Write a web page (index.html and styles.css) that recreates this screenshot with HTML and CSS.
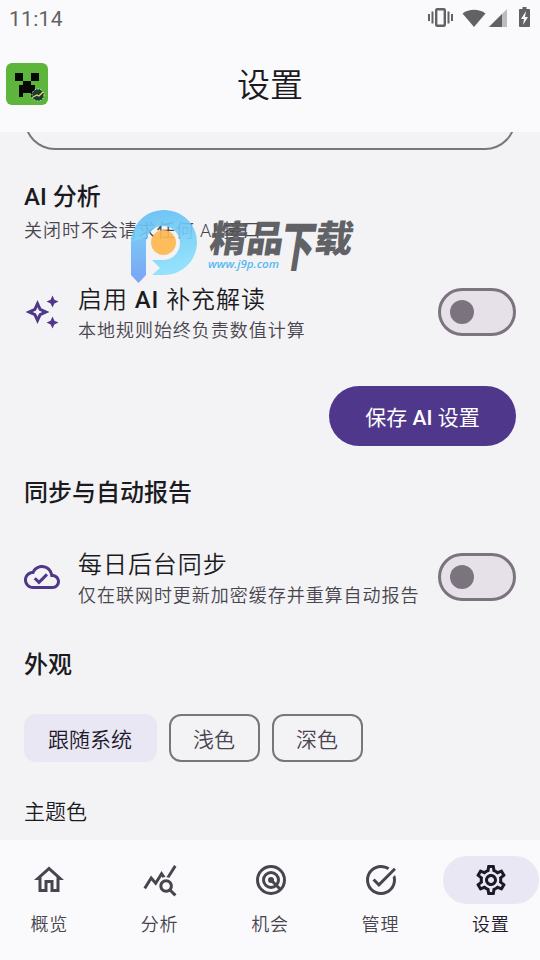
FILE: index.html
```html
<!DOCTYPE html>
<html lang="zh-CN">
<head>
<meta charset="utf-8">
<title>设置</title>
<link rel="stylesheet" href="styles.css">
</head>
<body>
<div class="screen">
  <header class="top">
    <div class="status">
      <span class="time">11:14</span>
      <svg class="status-icons" width="104" height="24" viewBox="0 0 104 24" fill="#626262">
        <path d="M0 12h2v7H0zM3.500 9.500h2v12h-2zM19.500 9.500h2v12h-2zM23 12h2v7h-2z"/>
        <rect x="8.200" y="7.200" width="8.600" height="16.600" rx="1" fill="none" stroke="#626262" stroke-width="2.400"/>
        <path d="M34.500 11.500C41 6.500 51 6.500 57.500 11.500L46 25z"/>
        <path d="M79 7v18H61z" opacity=".4"/>
        <path d="M74 12v13H61z"/>
        <path d="M92 7h2.500V5h4v2h2.500q1 0 1 1v16q0 1-1 1h-9q-1 0-1-1V8q0-1 1-1z"/>
        <path d="M98 9l-5 8h3l-1 6 5-8h-3z" fill="#fafafc"/>
      </svg>
    </div>
    <div class="appbar">
      <svg class="app-icon" width="42" height="42" viewBox="0 0 42 42">
        <rect width="42" height="42" rx="6" fill="#5db53c"/>
        <path d="M9 10h8v8H9zM25 10h8v8h-8zM17 18h8v4h4v12h-4v-4h-8v4h-4V22h4z" fill="#050805"/>
        <circle cx="32" cy="32" r="6" fill="#173e2d" stroke="#e8eee0" stroke-width="1" stroke-dasharray="1.500 1.500"/>
        <path d="M27 34l4-2 2 1 4-4" fill="none" stroke="#f0d36a" stroke-width="1.300"/>
      </svg>
      <h1>设置</h1>
    </div>
  </header>

  <main>
    <div class="field-end"></div>
    <section class="ai">
      <h2>AI 分析</h2>
      <p class="note">关闭时不会请求任何 AI 接口</p>
      <div class="row">
        <svg class="row-icon" viewBox="0 0 24 24"><path d="M19 9l1.250-2.750L23 5l-2.750-1.250L19 1l-1.250 2.750L15 5l2.750 1.250L19 9zm0 6l-1.250 2.750L15 19l2.750 1.250L19 23l1.250-2.750L23 19l-2.750-1.250L19 15zm-7.500-5.500L9 4 6.500 9.500 1 12l5.500 2.500L9 20l2.500-5.500L17 12l-5.500-2.500zm-1.510 3.490L9 15.170l-.99-2.180L5.830 12l2.180-.99L9 8.830l.99 2.180 2.180.99-2.180.99z"/></svg>
        <div class="row-text"><div class="row-title">启用 <b>AI</b> 补充解读</div><div class="row-sub">本地规则始终负责数值计算</div></div>
        <div class="switch"><i></i></div>
      </div>
      <div class="actions"><button class="save">保存 <b>AI</b> 设置</button></div>
    </section>

    <section class="sync">
      <h2>同步与自动报告</h2>
      <div class="row">
        <svg class="row-icon" viewBox="0 0 24 24"><path d="M19.350 10.040C18.670 6.590 15.640 4 12 4 9.110 4 6.610 5.640 5.360 8.040 2.350 8.360 0 10.910 0 14c0 3.310 2.690 6 6 6h13c2.760 0 5-2.240 5-5 0-2.640-2.050-4.780-4.650-4.960zM19 18H6c-2.210 0-4-1.790-4-4 0-2.050 1.530-3.760 3.560-3.970l1.070-.11.500-.95C8.080 7.140 9.940 6 12 6c2.620 0 4.880 1.860 5.390 4.430l.3 1.500 1.530.11c1.560.1 2.780 1.410 2.780 2.960 0 1.650-1.350 3-3 3zm-9-3.820l-2.090-2.090L6.500 13.500 10 17l6.010-6.010-1.410-1.410z"/></svg>
        <div class="row-text"><div class="row-title">每日后台同步</div><div class="row-sub">仅在联网时更新加密缓存并重算自动报告</div></div>
        <div class="switch"><i></i></div>
      </div>
    </section>

    <section class="look">
      <h2>外观</h2>
      <div class="chips">
        <span class="chip on">跟随系统</span>
        <span class="chip">浅色</span>
        <span class="chip">深色</span>
      </div>
      <h3>主题色</h3>
    </section>

    <svg class="watermark" width="230" height="80" viewBox="0 0 230 80">
      <defs>
        <linearGradient id="bowl" x1="0" y1="0" x2="0.200" y2="1"><stop offset="0" stop-color="#5fbdf4"/><stop offset="1" stop-color="#8be0fd"/></linearGradient>
        <linearGradient id="stem" x1="0" y1="0" x2="0" y2="1"><stop offset="0" stop-color="#6fc0f7"/><stop offset="1" stop-color="#6f9cf5"/></linearGradient>
      </defs>
      <g opacity=".9">
        <path d="M1 34C1 14 16 0 34 0s33 14 33 32-14 33-33 33H22l8-7-8-8h12a17 17 0 1 0-18-17H1z" fill="url(#bowl)"/>
        <path d="M1 31L16 28v37l-7.500 8L1 65z" fill="url(#stem)"/>
        <circle cx="33.500" cy="32.500" r="12.500" fill="#ffb84d"/>
      </g>
      <g class="mark-name" fill="#55565a" transform="skewX(-9)">
        <text x="85" y="42" textLength="74" lengthAdjust="spacingAndGlyphs">精品</text>
        <text class="tall" x="157" y="56" textLength="34" lengthAdjust="spacingAndGlyphs">下</text>
        <text x="190" y="42" textLength="38" lengthAdjust="spacingAndGlyphs">载</text>
      </g>
      <text class="mark-url" x="78" y="58" textLength="71" lengthAdjust="spacingAndGlyphs">www.j9p.com</text>
    </svg>
  </main>

  <nav>
    <a class="tab"><span class="pill"><svg viewBox="0 0 24 24"><path d="M12 5.690l5 4.500V18h-2v-6H9v6H7v-7.810l5-4.500M12 3L2 12h3v8h6v-6h2v6h6v-8h3L12 3z"/></svg></span>概览</a>
    <a class="tab"><span class="pill"><svg viewBox="0 0 24 24"><path d="M19.880 18.470c.44-.7.7-1.510.7-2.390 0-2.490-2.010-4.500-4.500-4.500s-4.500 2.010-4.500 4.500 2.010 4.500 4.490 4.500c.88 0 1.700-.26 2.390-.7L21.580 23 23 21.580l-3.120-3.110zm-3.800.11c-1.380 0-2.500-1.120-2.500-2.500s1.120-2.500 2.500-2.500 2.500 1.120 2.500 2.500-1.120 2.500-2.500 2.500zm-.36-8.500c-.74.02-1.450.18-2.100.45l-.55-.83-3.800 6.180-3.010-3.520-3.630 5.810L1 17l5-8 3 3.500L13 6l2.720 4.080zm2.590.5c-.64-.28-1.330-.45-2.050-.49L21.380 2 23 3.180l-4.690 7.400z"/></svg></span>分析</a>
    <a class="tab"><span class="pill nudge"><svg viewBox="0 0 24 24"><g fill="none" stroke="currentColor" stroke-width="2"><circle cx="12" cy="12" r="9"/><circle cx="12" cy="12" r="5"/><path d="M12 12l6.500 6.500"/></g><circle cx="12" cy="12" r="2"/></svg></span>机会</a>
    <a class="tab"><span class="pill nudge"><svg viewBox="0 0 24 24"><path d="M22 5.180L10.590 16.600l-4.240-4.240 1.410-1.410 2.830 2.830 10-10L22 5.180zm-2.210 5.040c.13.570.21 1.170.21 1.780 0 4.420-3.580 8-8 8s-8-3.580-8-8 3.580-8 8-8c1.580 0 3.040.46 4.280 1.250l1.440-1.440C16.100 2.670 14.130 2 12 2 6.480 2 2 6.480 2 12s4.480 10 10 10 10-4.480 10-10c0-1.190-.22-2.330-.6-3.390l-1.610 1.610z"/></svg></span>管理</a>
    <a class="tab active"><span class="pill"><svg viewBox="0 0 24 24"><path d="M19.430 12.980c.04-.32.07-.64.07-.98 0-.34-.03-.66-.07-.98l2.110-1.650c.19-.15.24-.42.12-.64l-2-3.460c-.09-.16-.26-.25-.44-.25-.06 0-.12.01-.17.03l-2.490 1c-.52-.4-1.080-.73-1.690-.98l-.38-2.650C14.460 2.180 14.250 2 14 2h-4c-.25 0-.46.18-.49.42l-.38 2.650c-.61.25-1.170.59-1.690.98l-2.490-1c-.06-.02-.12-.03-.18-.03-.17 0-.34.09-.43.25l-2 3.460c-.13.22-.07.49.12.64l2.110 1.650c-.04.32-.07.65-.07.98 0 .33.03.66.07.98l-2.110 1.650c-.19.15-.24.42-.12.64l2 3.460c.09.16.26.25.44.25.06 0 .12-.01.17-.03l2.490-1c.52.4 1.080.73 1.690.98l.38 2.650c.03.24.24.42.49.42h4c.25 0 .46-.18.49-.42l.38-2.650c.61-.25 1.170-.59 1.690-.98l2.490 1c.06.02.12.03.18.03.17 0 .34-.09.43-.25l2-3.460c.12-.22.07-.49-.12-.64l-2.110-1.650zm-1.980-1.710c.04.31.05.52.05.73 0 .21-.02.43-.05.73l-.14 1.130.89.7 1.080.84-.7 1.210-1.270-.51-1.040-.42-.9.68c-.43.32-.84.56-1.250.73l-1.060.43-.16 1.130-.2 1.350h-1.400l-.19-1.350-.16-1.130-1.060-.43c-.43-.18-.83-.41-1.230-.71l-.91-.7-1.060.43-1.270.51-.7-1.210 1.080-.84.89-.7-.14-1.130c-.03-.31-.05-.54-.05-.74s.02-.43.05-.73l.14-1.130-.89-.7-1.080-.84.7-1.210 1.270.51 1.040.42.9-.68c.43-.32.84-.56 1.250-.73l1.060-.43.16-1.130.2-1.350h1.390l.19 1.350.16 1.130 1.060.43c.43.18.83.41 1.230.71l.91.7 1.060-.43 1.270-.51.7 1.210-1.070.85-.89.7.14 1.130zM12 8c-2.210 0-4 1.790-4 4s1.790 4 4 4 4-1.790 4-4-1.790-4-4-4zm0 6c-1.100 0-2-.9-2-2s.9-2 2-2 2 .9 2 2-.9 2-2 2z"/></svg></span>设置</a>
  </nav>
</div>
</body>
</html>
```
FILE: styles.css
```css
* { box-sizing: border-box; }
body {
  margin: 0;
  font-family: Roboto, "Noto Sans CJK SC", sans-serif;
  font-weight: 350;
  color: #1b1b1f;
}
h1, h2, h3, p { margin: 0; font-weight: inherit; }
b { font-weight: 500; }
.screen {
  width: 540px;
  height: 960px;
  display: flex;
  flex-direction: column;
  overflow: hidden;
  background: #f3f3f5;
}
.top { height: 132px; background: #fafafc; flex: none; }
.status {
  height: 36px;
  display: flex;
  justify-content: space-between;
  padding: 0 8px 0 9px;
}
.time {
  font-size: 21px;
  font-weight: 400;
  line-height: 38px;
  letter-spacing: .3px;
  color: #626262;
}
.status-icons { margin-top: 2px; overflow: visible; }
.appbar {
  height: 96px;
  display: grid;
  grid-template-columns: 42px 1fr 42px;
  align-items: center;
  padding: 0 6px;
}
h1 { font-size: 33px; line-height: 48px; text-align: center; padding-top: 3px; }
main {
  position: relative;
  height: 708px;
  flex: none;
  padding: 0 24px;
  overflow: hidden;
}
.field-end {
  height: 60px;
  margin-top: -42px;
  border: 2px solid #7b747f;
  border-top: 0;
  border-radius: 0 0 31px 31px;
}
h2 { font-size: 24px; line-height: 36px; font-weight: 500; }
.ai { padding-top: 29px; }
.note, .row-sub {
  font-size: 18px;
  line-height: 24px;
  letter-spacing: .97px;
  color: #49454f;
  white-space: nowrap;
}
.note { margin-top: 4px; }
.row { display: flex; align-items: center; height: 60px; }
.ai .row { margin-top: 39px; }
.row-icon { width: 36px; height: 36px; fill: #4f378b; flex: none; }
.row-text { flex: 1; margin-left: 18px; min-width: 0; }
.row-title { font-size: 24px; line-height: 36px; letter-spacing: .95px; }
.row-sub { padding-top: 1px; margin-bottom: -1px; }
.switch {
  width: 78px;
  height: 48px;
  border: 3px solid #7b747f;
  border-radius: 24px;
  background: #e6e0e9;
  padding: 9px;
  flex: none;
}
.switch i {
  display: block;
  width: 24px;
  height: 24px;
  border-radius: 50%;
  background: #7b747f;
}
.actions { display: flex; justify-content: flex-end; margin-top: 44px; }
.save {
  width: 187px;
  height: 60px;
  border: 0;
  border-radius: 30px;
  background: #4f378b;
  color: #fff;
  font: 400 21px/60px Roboto, "Noto Sans CJK SC", sans-serif;
  padding: 2px 0 0;
}
.sync { padding-top: 29px; }
.sync .row { margin-top: 36px; }
.look { padding-top: 40px; }
.chips { display: flex; gap: 12px; margin-top: 31px; }
.chip {
  height: 48px;
  border: 2px solid #7b747f;
  border-radius: 12px;
  padding: 2px 22px 0;
  font-size: 21px;
  line-height: 44px;
  color: #49454f;
  width: 91px;
  white-space: nowrap;
}
.chip.on {
  width: 133px;
  border-color: transparent;
  background: #e9e7f3;
  background-clip: border-box;
  color: #1d192b;
}
h3 { font-size: 21px; line-height: 30px; margin-top: 35px; }
.watermark {
  position: absolute;
  left: 130px;
  top: 78px;
  overflow: visible;
}
.mark-name {
  font: 900 37px "Noto Sans CJK SC", sans-serif;
  opacity: .92;
}
.mark-name .tall { font-size: 54px; }
.mark-url {
  font: italic 600 11.5px "Open Sans", sans-serif;
  fill: #55b9ef;
}
nav {
  height: 120px;
  flex: none;
  display: grid;
  grid-template-columns: repeat(5, 1fr);
  gap: 12px;
  padding-top: 16px;
  background: #fafafc;
}
.tab {
  display: flex;
  flex-direction: column;
  align-items: center;
  font-size: 18px;
  line-height: 24px;
  letter-spacing: .8px;
  color: #49454f;
}
.pill {
  width: 96px;
  height: 48px;
  border-radius: 24px;
  display: grid;
  place-items: center;
  margin-bottom: 9px;
}
.pill.nudge { padding-left: 1.2px; }
.pill svg { width: 36px; height: 36px; fill: currentColor; }
.active { color: #1d192b; }
.active .pill { background: #e9e7f3; }
```
